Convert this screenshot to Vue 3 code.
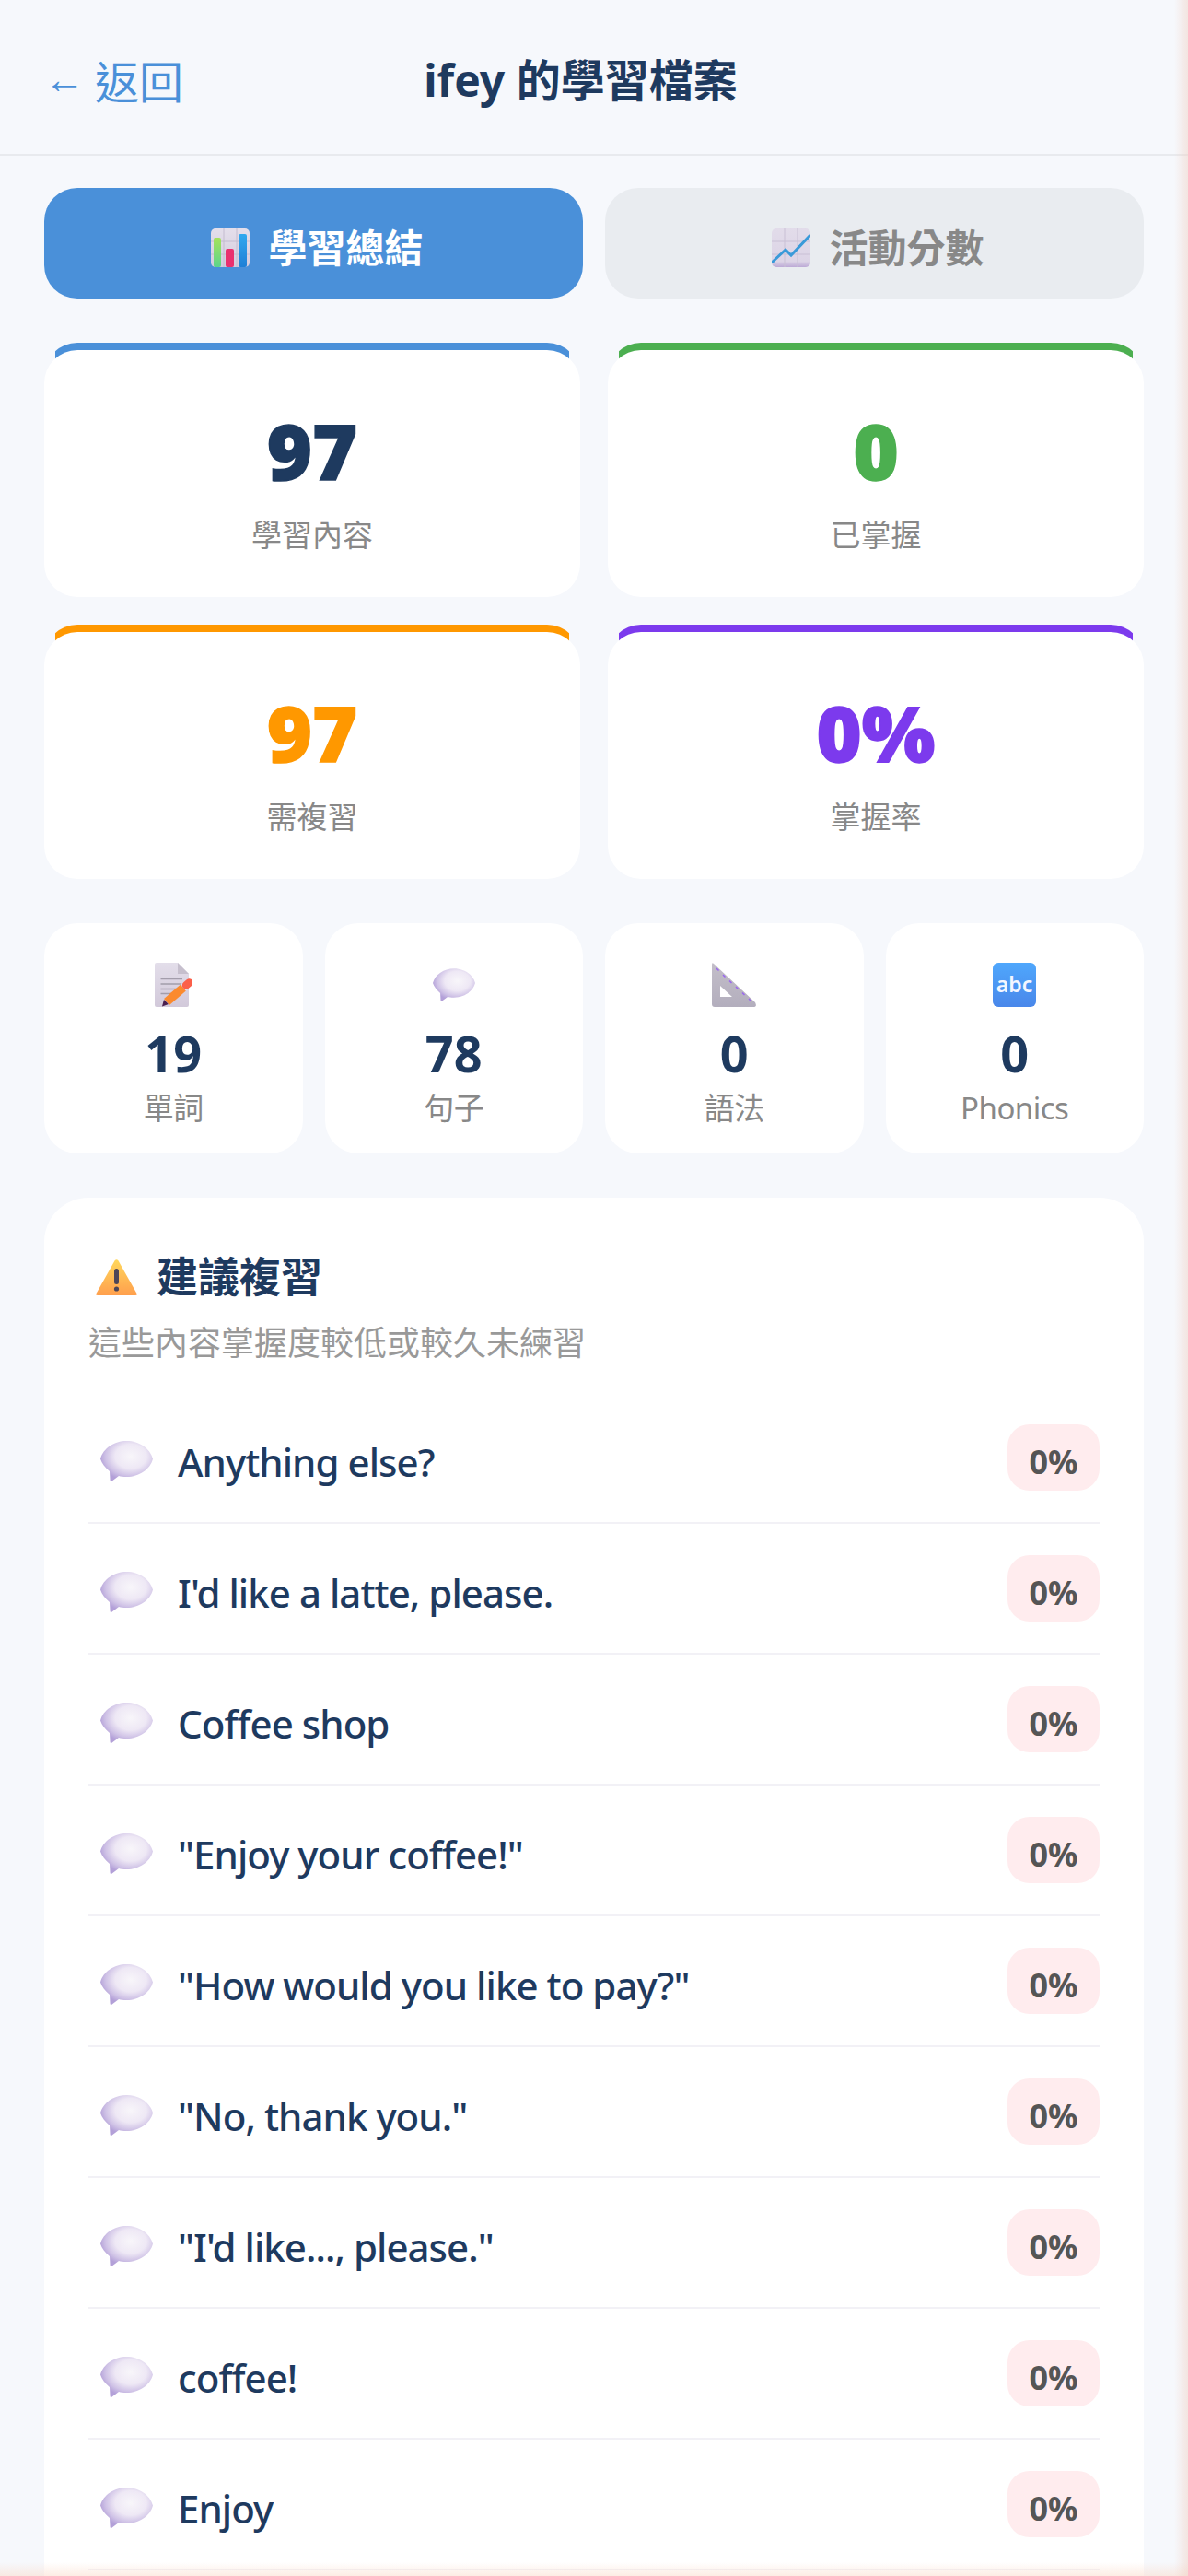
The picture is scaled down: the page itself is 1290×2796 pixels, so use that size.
<script setup>
const stats = [
  { value: '97', label: '學習內容', tone: 'navy' },
  { value: '0', label: '已掌握', tone: 'green' },
  { value: '97', label: '需複習', tone: 'orange' },
  { value: '0%', label: '掌握率', tone: 'purple' },
]
const minis = [
  { value: '19', label: '單詞', icon: 'doc' },
  { value: '78', label: '句子', icon: 'speech' },
  { value: '0', label: '語法', icon: 'ruler' },
  { value: '0', label: 'Phonics', icon: 'abc' },
]
const rows = [
  'Anything else?',
  "I'd like a latte, please.",
  'Coffee shop',
  '"Enjoy your coffee!"',
  '"How would you like to pay?"',
  '"No, thank you."',
  '"I\'d like..., please."',
  'coffee!',
  'Enjoy',
]
</script>

<template>
  <div class="page">
    <header class="top">
      <span class="back"><span class="arrow">←</span><span>返回</span></span>
      <h1 class="title">ifey 的學習檔案</h1>
      <span class="spacer"></span>
    </header>

    <main class="content">
      <div class="tabs">
        <div class="tab active">
          <svg class="tab-icon" viewBox="0 0 42 42">
            <defs>
              <linearGradient id="tile" x1="0" y1="0" x2="0" y2="1">
                <stop offset="0" stop-color="#e4dfeb" />
                <stop offset="1" stop-color="#d3cbdd" />
              </linearGradient>
              <linearGradient id="barG" x1="0" y1="0" x2="0" y2="1">
                <stop offset="0" stop-color="#a6e25c" />
                <stop offset="1" stop-color="#5cd58c" />
              </linearGradient>
              <linearGradient id="barB" x1="0" y1="0" x2="0" y2="1">
                <stop offset="0" stop-color="#31a9ef" />
                <stop offset="1" stop-color="#1f7fd6" />
              </linearGradient>
            </defs>
            <rect width="42" height="42" rx="5" fill="url(#tile)" />
            <path d="M14 0V42M28 0V42M0 14H42M0 28H42" stroke="#c4bcd0" stroke-width="1" fill="none" />
            <rect x="3" y="10" width="8" height="32" rx="2" fill="url(#barG)" />
            <rect x="16" y="22" width="9" height="20" rx="2" fill="#e9306f" />
            <rect x="30" y="6" width="9" height="36" rx="2" fill="url(#barB)" />
          </svg>
          <span>學習總結</span>
        </div>
        <div class="tab">
          <svg class="tab-icon" viewBox="0 0 42 42">
            <defs>
              <linearGradient id="tile2" x1="0" y1="0" x2="0" y2="1">
                <stop offset="0" stop-color="#e2dcea" />
                <stop offset="0.85" stop-color="#dcd4e6" />
                <stop offset="1" stop-color="#bca9d6" />
              </linearGradient>
            </defs>
            <rect width="42" height="42" rx="5" fill="url(#tile2)" />
            <path d="M14 0V42M28 0V42M0 14H42M0 28H42" stroke="#c9c0d5" stroke-width="1" fill="none" />
            <path d="M0 37L15 23L21 29L42 7" stroke="#3a9ad9" stroke-width="3" fill="none" />
          </svg>
          <span>活動分數</span>
        </div>
      </div>

      <section class="stats">
        <div v-for="s in stats" :key="s.label" class="stat" :class="s.tone">
          <div class="stat-value">{{ s.value }}</div>
          <div class="stat-label">{{ s.label }}</div>
        </div>
      </section>

      <section class="minis">
        <div v-for="m in minis" :key="m.label" class="mini">
          <div class="mini-icon">
            <svg v-if="m.icon === 'doc'" width="41" height="48" viewBox="0 0 41 48">
              <defs>
                <linearGradient id="paper" x1="0" y1="0" x2="0" y2="1">
                  <stop offset="0" stop-color="#e3deea" />
                  <stop offset="1" stop-color="#d2c9da" />
                </linearGradient>
              </defs>
              <path d="M2 0H25L37 12V46a2 2 0 0 1-2 2H2a2 2 0 0 1-2-2V2a2 2 0 0 1 2-2Z" fill="url(#paper)" />
              <path d="M25 0L37 12H25Z" fill="#c6bfcd" />
              <path d="M6.500 17.500H30M6.500 23H30M6.500 28.500H26M6.500 33.500H19" stroke="#a39dab" stroke-width="1.600" fill="none" />
              <path d="M8 47.500L10 40L15 45Z" fill="#4a1f4f" />
              <path d="M13 42.500L31 27" stroke="#fb8a2e" stroke-width="9" fill="none" />
              <path d="M31 27L34 24.500" stroke="#e4dcec" stroke-width="9" fill="none" />
              <path d="M34 24.500L37.500 21.500" stroke="#fb5f4a" stroke-width="8.500" stroke-linecap="round" fill="none" />
            </svg>
            <svg v-else-if="m.icon === 'speech'" class="mini-speech" viewBox="0 0 57 44">
              <defs>
                <radialGradient id="bubbleM" cx="0.58" cy="0.38" r="0.6">
                  <stop offset="0" stop-color="#f8f6fa" />
                  <stop offset="0.5" stop-color="#eee8f5" />
                  <stop offset="0.8" stop-color="#cfc2e6" />
                  <stop offset="1" stop-color="#b3a0d8" />
                </radialGradient>
              </defs>
              <path d="M0 19.500C3 8 15 0 28.500 0C42 0 54 8 57 19.500C54 31 42 39 28.500 39C25 39 22 38.600 20 38L12 44Q10.500 44.500 10.500 42L10 33C5 29 1.500 24 0 19.500Z" fill="url(#bubbleM)" />
            </svg>
            <svg v-else-if="m.icon === 'ruler'" width="48" height="48" viewBox="0 0 48 48">
              <defs>
                <linearGradient id="rulerFill" x1="0" y1="0" x2="0" y2="1">
                  <stop offset="0" stop-color="#c3bec9" />
                  <stop offset="1" stop-color="#b3aebd" />
                </linearGradient>
              </defs>
              <path fill-rule="evenodd" d="M0 2Q0 -1 2 1L47 43Q49.500 48 45 48H3Q0 48 0 45ZM9 25V37H22Z" fill="url(#rulerFill)" />
              <path d="M5 6L7.500 8.500M12 13L14.500 15.500M19 19.500L21.500 22M26 26L28.500 28.500M33 32.500L35.500 35M40 39L42.500 41.500" stroke="#9a66f0" stroke-width="1.500" fill="none" />
            </svg>
            <svg v-else width="47" height="48" viewBox="0 0 47 48">
              <defs>
                <linearGradient id="abcFill" x1="0" y1="0" x2="0" y2="1">
                  <stop offset="0" stop-color="#4fa7fc" />
                  <stop offset="1" stop-color="#4987ea" />
                </linearGradient>
              </defs>
              <rect width="47" height="48" rx="6" fill="url(#abcFill)" />
              <text class="abc-text" x="23.500" y="32" text-anchor="middle">abc</text>
            </svg>
          </div>
          <div class="mini-value">{{ m.value }}</div>
          <div class="mini-label">{{ m.label }}</div>
        </div>
      </section>

      <section class="review">
        <h2 class="review-title">
          <svg class="warn" width="45" height="39" viewBox="0 0 45 39">
            <defs>
              <linearGradient id="warnFill" x1="0" y1="0" x2="0" y2="1">
                <stop offset="0" stop-color="#ffd75c" />
                <stop offset="1" stop-color="#ff9f4d" />
              </linearGradient>
            </defs>
            <path d="M20.500 1.500Q22.500 -1 24.500 1.500L44.500 37Q45.500 39 43 39H2Q-0.500 39 0.500 37Z" fill="url(#warnFill)" />
            <rect x="20" y="10" width="5" height="17" rx="2.500" fill="#4d4658" />
            <circle cx="22.500" cy="32" r="2.600" fill="#4d4658" />
          </svg>
          <span>建議複習</span>
        </h2>
        <p class="review-sub">這些內容掌握度較低或較久未練習</p>
        <ul class="list">
          <li v-for="r in rows" :key="r" class="row">
            <svg class="row-icon" viewBox="0 0 57 44">
              <defs>
                <radialGradient id="bubble" cx="0.58" cy="0.38" r="0.6">
                  <stop offset="0" stop-color="#f8f6fa" />
                  <stop offset="0.5" stop-color="#eee8f5" />
                  <stop offset="0.8" stop-color="#cfc2e6" />
                  <stop offset="1" stop-color="#b3a0d8" />
                </radialGradient>
              </defs>
              <path d="M0 19.500C3 8 15 0 28.500 0C42 0 54 8 57 19.500C54 31 42 39 28.500 39C25 39 22 38.600 20 38L12 44Q10.500 44.500 10.500 42L10 33C5 29 1.500 24 0 19.500Z" fill="url(#bubble)" />
            </svg>
            <span class="row-text">{{ r }}</span>
            <span class="pill">0%</span>
          </li>
        </ul>
      </section>
    </main>
  </div>
</template>

<style>
html, body { margin: 0; padding: 0; }
</style>

<style scoped>
.page {
  position: relative;
  width: 1290px;
  height: 2796px;
  overflow: hidden;
  background: #f6f8fc;
  font-family: "Noto Sans", "Noto Sans CJK TC", sans-serif;
  color: #1e3a5f;
}
.page::after {
  content: "";
  position: absolute;
  inset: 0;
  pointer-events: none;
  background:
    linear-gradient(to left, rgba(240, 205, 190, 0.45), rgba(240, 205, 190, 0) 15px),
    linear-gradient(to top, rgba(250, 215, 195, 0.45), rgba(250, 215, 195, 0) 15px);
}
.top {
  height: 167px;
  box-sizing: content-box;
  border-bottom: 2px solid #e8eaee;
  padding: 0 48px;
  display: flex;
  align-items: center;
  justify-content: space-between;
}
.back {
  width: 148px;
  padding-top: 4px;
  font-size: 48px;
  color: #4a90d9;
  white-space: nowrap;
  display: flex;
  align-items: center;
  gap: 12px;
}
.arrow {
  width: 43px;
  font-size: 44px;
  font-family: "Liberation Sans", sans-serif;
  line-height: 1;
}
.title {
  margin: 0;
  padding-top: 6px;
  font-size: 48px;
  font-weight: 700;
  line-height: 60px;
  white-space: nowrap;
}
.spacer { width: 177px; }
.content {
  padding: 35px 48px 0;
}
.tabs {
  display: grid;
  grid-template-columns: 1fr 1fr;
  gap: 24px;
}
.tab {
  height: 120px;
  box-sizing: border-box;
  padding: 4px 0 0 8px;
  border-radius: 36px;
  background: #e9ecf0;
  color: #888;
  font-size: 42px;
  font-weight: 700;
  display: flex;
  align-items: center;
  justify-content: center;
  gap: 20px;
}
.tab.active {
  background: #4a90d9;
  color: #fff;
}
.tab-icon { width: 42px; height: 42px; flex: none; margin-top: 6px; }
.stats {
  margin-top: 56px;
  display: grid;
  grid-template-columns: 1fr 1fr;
  column-gap: 30px;
  row-gap: 38px;
  isolation: isolate;
}
.stat {
  position: relative;
  height: 268px;
  box-sizing: border-box;
  padding-top: 59px;
  background: #fff;
  border-radius: 36px;
  text-align: center;
}
.stat::before {
  content: "";
  position: absolute;
  z-index: -1;
  top: -8px;
  left: 0;
  right: 0;
  height: 80px;
  border-radius: 36px;
  background: var(--accent);
  clip-path: inset(0 12px 0 12px);
}
.navy { --accent: #4a90d9; --num: #1e3a5f; }
.green { --accent: #4caf50; --num: #4caf50; }
.orange { --accent: #ff9800; --num: #ff9800; }
.purple { --accent: #7c3aed; --num: #7c3aed; }
.stat-value {
  font-size: 84px;
  line-height: 100px;
  font-weight: 900;
  -webkit-text-stroke: 1.5px currentColor;
  color: var(--num);
}
.stat-label {
  margin-top: 21px;
  font-size: 33px;
  line-height: 42px;
  color: #888;
}
.minis {
  margin-top: 48px;
  display: grid;
  grid-template-columns: repeat(4, 1fr);
  gap: 24px;
}
.mini {
  height: 250px;
  box-sizing: border-box;
  padding-top: 43px;
  background: #fff;
  border-radius: 36px;
  text-align: center;
}
.mini-icon {
  height: 48px;
  display: flex;
  align-items: center;
  justify-content: center;
}
.mini-speech { width: 46px; height: 36px; }
.abc-text {
  font-family: "Noto Sans", sans-serif;
  font-size: 23px;
  font-weight: 600;
  fill: #f4f6ff;
}
.mini-value {
  margin-top: 14px;
  font-size: 54px;
  line-height: 72px;
  font-weight: 700;
}
.mini-label {
  margin-top: 1px;
  font-size: 33px;
  line-height: 46px;
  letter-spacing: -0.5px;
  color: #888;
}
.review {
  margin-top: 48px;
  padding: 0 48px;
  min-height: 1600px;
  background: #fff;
  border-radius: 48px;
}
.review-title {
  margin: 0;
  padding-top: 56px;
  font-size: 45px;
  line-height: 60px;
  font-weight: 700;
  display: flex;
  align-items: center;
  gap: 21px;
}
.warn { margin-left: 8px; flex: none; }
.review-sub {
  margin: 17px 0 0;
  font-size: 36px;
  line-height: 50px;
  color: #999;
}
.list {
  list-style: none;
  margin: 0;
  padding: 0;
  margin-top: 29px;
}
.row {
  height: 142px;
  box-sizing: border-box;
  border-bottom: 2px solid #f2f1f6;
  display: flex;
  align-items: center;
}
.row-icon {
  width: 57px;
  height: 44px;
  margin-left: 13px;
  margin-right: 27px;
  margin-top: 8px;
  flex: none;
}
.row-text {
  flex: 1;
  font-size: 42px;
  line-height: 60px;
  font-weight: 500;
  letter-spacing: -0.95px;
  margin-top: 10px;
}
.pill {
  width: 100px;
  height: 72px;
  box-sizing: border-box;
  padding-top: 10px;
  border-radius: 24px;
  background: #ffecee;
  color: #555;
  font-size: 36px;
  line-height: 62px;
  font-weight: 700;
  text-align: center;
}
</style>
